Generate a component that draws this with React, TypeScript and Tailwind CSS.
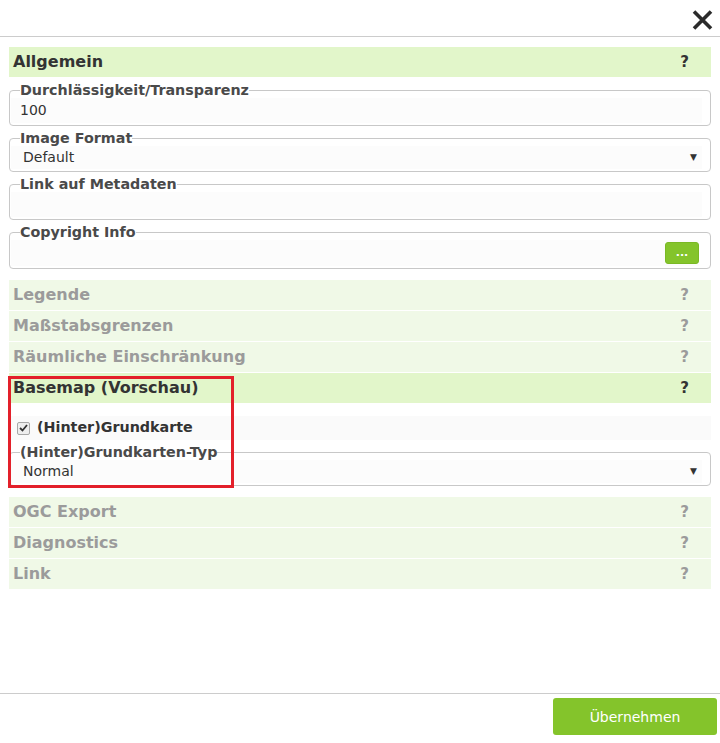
import React from "react";

const font = { fontFamily: '"DejaVu Sans", Verdana, sans-serif' };

function SectionHeader({ title, active }: { title: string; active?: boolean }) {
  return (
    <div
      className={
        "h-[31px] flex items-center justify-between pl-[4px] pr-[22px] border-b border-white " +
        (active ? "bg-[#e2f6ca] text-[#333]" : "bg-[#f0f9e7] text-[#9b9b9b]")
      }
    >
      <span className="text-[16px] font-bold leading-none">{title}</span>
      <span className="text-[15px] font-bold leading-none">?</span>
    </div>
  );
}

function Field({
  label,
  children,
}: {
  label: string;
  children: React.ReactNode;
}) {
  return (
    <fieldset className="border border-[#c8c8c8] rounded-[4px] p-0 m-0 pb-[2px]">
      <legend className="ml-[10px] p-0 text-[14.3px] font-bold leading-[16px] text-[#4a4a4a]">
        {label}
      </legend>
      {children}
    </fieldset>
  );
}

export default function App() {
  return (
    <div className="w-[720px] h-[743px] bg-white relative flex flex-col" style={font}>
      {/* Header */}
      <div className="h-[37px] border-b border-[#cccccc] flex items-start justify-end pr-[7px] pt-[10px] shrink-0">
        <svg width="21" height="20" viewBox="0 0 21 20">
          <path d="M2 1.5 L19 18.5 M19 1.5 L2 18.5" stroke="#2b2b2b" strokeWidth="3.6" strokeLinecap="butt" />
        </svg>
      </div>

      {/* Content */}
      <div className="flex-1 px-[9px] pt-[10px] text-[#333]">
        <SectionHeader title="Allgemein" active />
        <div className="flex flex-col gap-[4px] mt-[4px]">
          <Field label="Durchlässigkeit/Transparenz">
            <div className="h-[25px] ml-[1px] mr-[8px] bg-[#fcfcfc] flex items-center pl-[9px] text-[14px] text-[#333]">
              100
            </div>
          </Field>
          <Field label="Image Format">
            <div className="h-[23px] ml-[1px] mr-[8px] bg-[#fcfcfc] flex items-center justify-between pl-[12px] pr-[5px] text-[14px] text-[#333]">
              <span>Default</span>
              <span className="text-[9px] text-[#333]">▼</span>
            </div>
          </Field>
          <Field label="Link auf Metadaten">
            <div className="h-[25px] ml-[1px] mr-[8px] bg-[#fcfcfc]" />
          </Field>
          <Field label="Copyright Info">
            <div className="h-[26px] ml-[1px] mr-[11px] bg-[#fcfcfc] flex items-center justify-end">
              <div className="w-[34px] h-[22px] rounded-[3px] bg-[#84c42b] border border-[#7ab825] flex items-center justify-center text-white text-[11px] font-bold leading-none pb-[2px]">
                ...
              </div>
            </div>
          </Field>
        </div>

        <div className="mt-[11px]">
          <SectionHeader title="Legende" />
          <SectionHeader title="Maßstabsgrenzen" />
          <SectionHeader title="Räumliche Einschränkung" />
          <SectionHeader title="Basemap (Vorschau)" active />
        </div>

        <div className="mt-[12px] h-[24px] bg-[#fafafa] flex items-center pl-[8px] gap-[7px]">
          <span className="w-[13px] h-[13px] rounded-[2px] border border-[#a8a8a8] bg-[#eeeeee] flex items-center justify-center">
            <svg width="9" height="8" viewBox="0 0 9 8">
              <path d="M1 4 L3.5 6.5 L8 1" stroke="#333" strokeWidth="1.8" fill="none" />
            </svg>
          </span>
          <span className="text-[14.3px] font-bold text-[#333]">(Hinter)Grundkarte</span>
        </div>
        <div className="mt-[4px]">
          <Field label="(Hinter)Grundkarten-Typ">
            <div className="h-[23px] ml-[1px] mr-[8px] bg-[#fcfcfc] flex items-center justify-between pl-[12px] pr-[5px] text-[14px] text-[#333]">
              <span>Normal</span>
              <span className="text-[9px] text-[#333]">▼</span>
            </div>
          </Field>
        </div>

        <div className="mt-[11px]">
          <SectionHeader title="OGC Export" />
          <SectionHeader title="Diagnostics" />
          <SectionHeader title="Link" />
        </div>
      </div>

      {/* Footer */}
      <div className="h-[50px] border-t border-[#cccccc] flex items-start justify-end pr-[3px] pt-[4px] shrink-0">
        <button className="w-[164px] h-[37px] rounded-[3px] bg-[#84c42b] text-white text-[14px] leading-none">
          Übernehmen
        </button>
      </div>

      {/* Annotation */}
      <div className="absolute left-[8px] top-[376px] w-[226px] h-[112px] border-[3px] border-[#e3202a] pointer-events-none" />
    </div>
  );
}
